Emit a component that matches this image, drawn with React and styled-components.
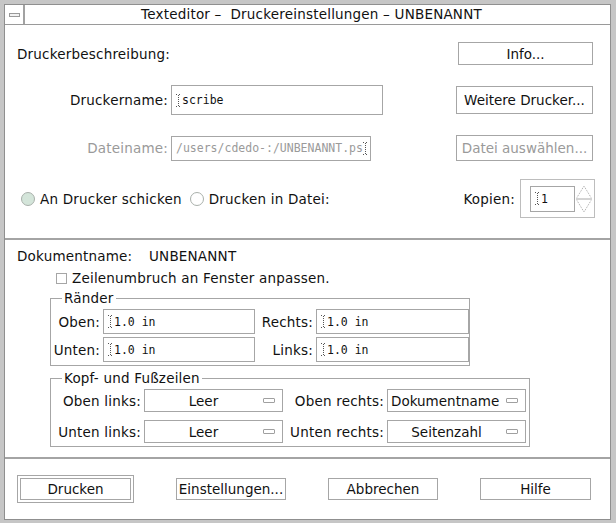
import React from 'react'
import styled, { createGlobalStyle } from 'styled-components'

const GlobalStyle = createGlobalStyle`
  html, body {
    margin: 0;
    padding: 0;
    background: #c6c6c6;
  }
  body {
    font-family: "DejaVu Sans", "Liberation Sans", sans-serif;
    font-size: 13.5px;
    letter-spacing: 0.2px;
    color: #111;
  }
`

function App() {
  return (
    <Frame>
      <GlobalStyle />
      <Window>
        <TitleBar>
          <MenuBox><MenuMark /></MenuBox>
          <Title>Texteditor –&nbsp; Druckereinstellungen – UNBENANNT</Title>
        </TitleBar>

        <TopSection>
          <Row>
            <Text>Druckerbeschreibung:</Text>
            <Button $w={135} $h={23}>Info...</Button>
          </Row>
          <Row>
            <Field>
              <FieldLabel>Druckername:</FieldLabel>
              <TextField $w={212} $h={30}><Caret />scribe</TextField>
            </Field>
            <Button $w={137} $h={28}>Weitere Drucker...</Button>
          </Row>
          <Row>
            <Field>
              <FieldLabel $disabled>Dateiname:</FieldLabel>
              <TextField $w={200} $h={25} $disabled>/users/cdedo-:/UNBENANNT.ps<Caret /></TextField>
            </Field>
            <Button $w={137} $h={26} $disabled>Datei auswählen...</Button>
          </Row>
          <Row $lift>
            <RadioGroup>
              <Radio><RadioDot $on />An Drucker schicken</Radio>
              <Radio><RadioDot />Drucken in Datei:</Radio>
            </RadioGroup>
            <Copies>
              Kopien:
              <SpinBox>
                <TextField $w={45} $h={26}><Caret />1</TextField>
                <SpinArrows />
              </SpinBox>
            </Copies>
          </Row>
        </TopSection>

        <LowerSection>
          <DocRow>
            <DocLabel>Dokumentname:</DocLabel>
            UNBENANNT
          </DocRow>
          <CheckRow>
            <CheckBox />
            Zeilenumbruch an Fenster anpassen.
          </CheckRow>

          <Group $w={420} $top={4}>
            <Legend>Ränder</Legend>
            <MarginGrid>
              <GridLabel>Oben:</GridLabel>
              <TextField $h={25}><Caret />1.0 in</TextField>
              <GridLabel>Rechts:</GridLabel>
              <TextField $h={25}><Caret />1.0 in</TextField>
              <GridLabel>Unten:</GridLabel>
              <TextField $h={25}><Caret />1.0 in</TextField>
              <GridLabel>Links:</GridLabel>
              <TextField $h={25}><Caret />1.0 in</TextField>
            </MarginGrid>
          </Group>

          <Group $w={480} $top={4}>
            <Legend>Kopf- und Fußzeilen</Legend>
            <HeaderGrid>
              <GridLabel>Oben links:</GridLabel>
              <Select>Leer</Select>
              <GridLabel>Oben rechts:</GridLabel>
              <Select $left>Dokumentname</Select>
              <GridLabel>Unten links:</GridLabel>
              <Select>Leer</Select>
              <GridLabel>Unten rechts:</GridLabel>
              <Select>Seitenzahl</Select>
            </HeaderGrid>
          </Group>
        </LowerSection>

        <ButtonBar>
          <DefaultRing><Button $w={111} $h={22}>Drucken</Button></DefaultRing>
          <Button $w={110} $h={22}>Einstellungen...</Button>
          <Button $w={110} $h={22}>Abbrechen</Button>
          <Button $w={111} $h={22}>Hilfe</Button>
        </ButtonBar>
      </Window>
    </Frame>
  )
}

function Caret() {
  return (
    <CaretSvg width="5" height="13" viewBox="0 0 5 13">
      <path
        d="M0 0.5h2M3 0.5h2M2.5 1v11M0 12.5h2M3 12.5h2"
        stroke="#555"
        strokeDasharray="1 1"
        fill="none"
      />
    </CaretSvg>
  )
}

function Select({ children, $left }) {
  return (
    <SelectBox>
      <SelectText $left={$left}>{children}</SelectText>
      <SelectMark />
    </SelectBox>
  )
}

function SpinArrows() {
  return (
    <svg width="16" height="28" viewBox="0 0 16 28">
      <g stroke="#a8a8a8" fill="none" strokeDasharray="1 1">
        <path d="M1 12.5L8 1L15 12.5" />
        <path d="M1 15.5L8 27L15 15.5" />
      </g>
      <path d="M0 14h16" stroke="#a8a8a8" />
    </svg>
  )
}

const Frame = styled.div`
  width: 616px;
  height: 523px;
  box-sizing: border-box;
  padding: 4px 5px 3px 4px;
  background: #c6c6c6;
  display: flex;
`

const Window = styled.div`
  flex: 1;
  display: flex;
  flex-direction: column;
  border: 1px solid #8f8f8f;
  background: #fff;
`

const TitleBar = styled.div`
  display: flex;
  height: 19px;
  border-bottom: 1px solid #9a9a9a;
`

const MenuBox = styled.div`
  width: 18px;
  border-right: 2px solid #a2a2a2;
  display: flex;
  align-items: center;
  justify-content: center;
`

const MenuMark = styled.div`
  width: 9px;
  height: 2px;
  border: 1px solid #999;
  background: #f2f2f2;
`

const Title = styled.div`
  flex: 1;
  text-align: center;
  line-height: 19px;
  padding-right: 12px;
  white-space: nowrap;
`

const TopSection = styled.div`
  display: flex;
  flex-direction: column;
  gap: 20px;
  padding: 17px 17px 20px 12px;
  border-bottom: 2px solid #a4a4a4;
`

const Row = styled.div`
  display: flex;
  align-items: center;
  justify-content: space-between;
  margin-top: ${p => (p.$lift ? '-2px' : '0')};
`

const Text = styled.span`
  white-space: nowrap;
`

const Field = styled.div`
  display: flex;
  align-items: center;
  gap: 3px;
`

const FieldLabel = styled.span`
  width: 151px;
  text-align: right;
  white-space: nowrap;
  color: ${p => (p.$disabled ? '#9a9a9a' : '#111')};
`

const Button = styled.div`
  box-sizing: border-box;
  width: ${p => p.$w}px;
  height: ${p => p.$h}px;
  border: 1px solid #a6a6a6;
  background: #fff;
  display: flex;
  align-items: center;
  justify-content: center;
  white-space: nowrap;
  letter-spacing: 0;
  color: ${p => (p.$disabled ? '#9a9a9a' : '#111')};
`

const TextField = styled.div`
  box-sizing: border-box;
  width: ${p => (p.$w ? `${p.$w}px` : 'auto')};
  height: ${p => p.$h}px;
  border: 1px solid #a6a6a6;
  background: #fff;
  display: flex;
  align-items: center;
  padding-left: 4px;
  font-family: "DejaVu Sans Mono", "Liberation Mono", monospace;
  font-size: 11.5px;
  letter-spacing: 0;
  white-space: nowrap;
  overflow: hidden;
  color: ${p => (p.$disabled ? '#9a9a9a' : '#111')};
`

const CaretSvg = styled.svg`
  flex: none;
  margin-right: 1px;
`

const RadioGroup = styled.div`
  display: flex;
  align-items: center;
  gap: 8px;
  margin-left: 4px;
`

const Radio = styled.span`
  display: flex;
  align-items: center;
  gap: 5px;
  white-space: nowrap;
`

const RadioDot = styled.span`
  box-sizing: border-box;
  width: 14px;
  height: 14px;
  border-radius: 50%;
  border: 1px solid #a9b0ab;
  background: ${p => (p.$on ? '#d4e5da' : '#fff')};
`

const Copies = styled.div`
  display: flex;
  align-items: center;
  gap: 5px;
  margin-right: -2px;
`

const SpinBox = styled.div`
  box-sizing: border-box;
  width: 75px;
  height: 39px;
  border: 1px solid #bdbdbd;
  display: flex;
  align-items: center;
  gap: 1px;
  padding-left: 9px;
`

const LowerSection = styled.div`
  flex: 1;
  display: flex;
  flex-direction: column;
  padding: 8px 12px 0 12px;
  border-bottom: 2px solid #a4a4a4;
`

const DocRow = styled.div`
  display: flex;
  line-height: 16px;
  white-space: nowrap;
`

const DocLabel = styled.span`
  width: 132px;
`

const CheckRow = styled.div`
  display: flex;
  align-items: center;
  gap: 5px;
  margin: 6px 0 0 39px;
  line-height: 16px;
`

const CheckBox = styled.span`
  box-sizing: border-box;
  width: 11px;
  height: 11px;
  border: 1px solid #a6a6a6;
`

const Group = styled.fieldset`
  box-sizing: border-box;
  width: ${p => p.$w}px;
  margin: ${p => p.$top}px 0 0 33px;
  padding: 3px 0 3px 1px;
  border: 1px solid #a6a6a6;
`

const Legend = styled.legend`
  margin-left: 10px;
  padding: 0 2px;
  line-height: 16px;
`

const MarginGrid = styled.div`
  display: grid;
  grid-template-columns: 48px 152px 55px 153px;
  grid-auto-rows: 25px;
  column-gap: 3px;
  row-gap: 3px;
  align-items: center;
`

const HeaderGrid = styled.div`
  display: grid;
  grid-template-columns: 89px 139px 98px 139px;
  grid-auto-rows: 23px;
  column-gap: 3px;
  row-gap: 8px;
  align-items: center;
`

const GridLabel = styled.span`
  text-align: right;
  white-space: nowrap;
`

const SelectBox = styled.div`
  box-sizing: border-box;
  height: 23px;
  border: 1px solid #a6a6a6;
  display: flex;
  align-items: center;
  padding: 0 7px 0 3px;
  white-space: nowrap;
  letter-spacing: 0;
`

const SelectText = styled.span`
  flex: 1;
  text-align: ${p => (p.$left ? 'left' : 'center')};
`

const SelectMark = styled.span`
  box-sizing: border-box;
  width: 12px;
  height: 5px;
  border: 1px solid #a0a0a0;
  border-radius: 1px;
  margin-left: 4px;
`

const ButtonBar = styled.div`
  height: 60px;
  box-sizing: border-box;
  display: flex;
  align-items: center;
  justify-content: space-between;
  padding: 0 19px 0 12px;
`

const DefaultRing = styled.div`
  border: 1px solid #a6a6a6;
  padding: 2px;
`

export default App
